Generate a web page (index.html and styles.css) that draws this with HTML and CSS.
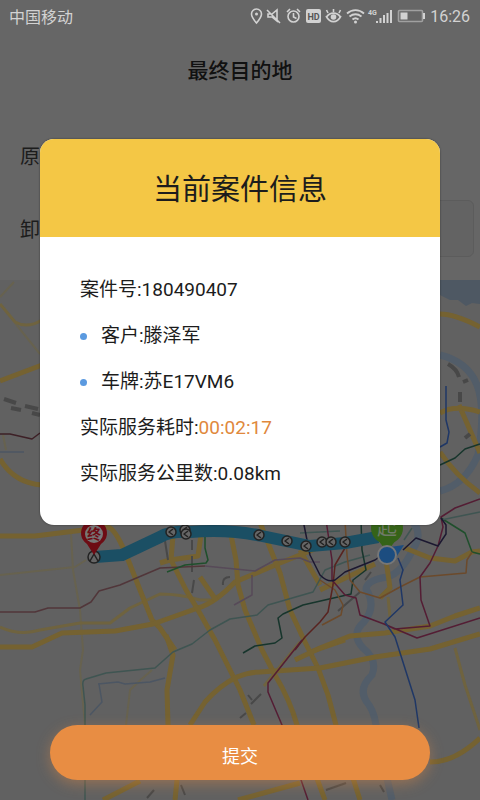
FILE: index.html
```
<!DOCTYPE html>
<html lang="zh-CN">
<head>
  <meta charset="UTF-8">
  <meta name="viewport" content="width=device-width, initial-scale=1.0">
  <title>最终目的地</title>
  <link rel="stylesheet" href="styles.css">
</head>
<body>

  <div class="screen">
    <div class="status-bar">
      <span>中国移动</span>
      <div class="status-icons">
        <svg width="176" height="20" viewBox="0 0 176 20" fill="none" stroke="#d2d2d2" stroke-width="1.6">
          <!-- location -->
          <path d="M7.500 17C4.500 13.500 2.500 10.700 2.500 8a5 5 0 0 1 10 0c0 2.700-2 5.500-5 9z"/>
          <circle cx="7.500" cy="8" r="1.500" fill="#d2d2d2" stroke="none"/>
          <!-- muted -->
          <path d="M19 8h4l5-4v11l-5-4h-4zM18 4l13 13"/>
          <!-- alarm -->
          <circle cx="44.500" cy="10.500" r="5.500"/>
          <path d="M44.500 7v4l3 1.500M38 6l3-3M51 6l-3-3"/>
          <!-- hd -->
          <rect x="57" y="3" width="15" height="14" rx="2" fill="#d2d2d2" stroke="none"/>
          <text x="64.500" y="14" class="hd-text">HD</text>
          <!-- eye -->
          <path d="M77 10c4 7.500 11 7.500 15 0M78 10.500c3-4.500 10-4.500 13 0M84.500 6V3M79 7l-1.500-3M90 7l1.500-3"/>
          <circle cx="84.500" cy="11" r="2.800" fill="#d2d2d2" stroke="none"/>
          <!-- wifi -->
          <path d="M98 7.500c5-4.500 12-4.500 17 0M100.500 10.500c4-3 8-3 12 0M103.500 13.500c2-1.700 4-1.700 6 0" stroke-width="1.800"/>
          <circle cx="106.500" cy="16" r="1.500" fill="#d2d2d2" stroke="none"/>
          <!-- signal -->
          <text x="119" y="9" class="net-text">4G</text>
          <path d="M128 17v-2M131.500 17v-5M135 17V9M138.500 17V7M142 17V4" stroke-width="2"/>
          <!-- battery -->
          <rect x="149.500" y="4.500" width="24" height="11" rx="1" stroke="#a0a0a0"/>
          <path d="M151.500 6.500h7v7h-7z" fill="#d2d2d2" stroke="none"/>
          <path d="M175 7v6" stroke-width="2"/>
        </svg>
        <span>16:26</span>
      </div>
    </div>

    <h1 class="page-title">最终目的地</h1>

    <div class="form">
      <div class="form-row"><span class="form-label">原</span></div>
      <div class="form-row">
        <label class="form-label" for="unload">卸</label>
        <input class="form-input" id="unload" type="text">
      </div>
    </div>

    <div class="map-wrap">
      <svg class="map" viewBox="0 280 480 520" preserveAspectRatio="xMidYMid slice">
        <!-- water -->
        <path class="water-fill" d="M400 280h80v24l-8-1-6 3-8-6-8 0-10-5h-40z"/>
        <g class="water">
          <path d="M440 355Q468 362 477 385T478 455Q465 485 440 491"/>
          <path d="M411 520Q424 533 413 549Q402 573 387 577Q367 580 366 589Q377 606 364 622Q350 634 363 648Q378 660 372 675Q356 690 369 705Q376 715 377 735L392 800"/>
        </g>

        <!-- minor roads -->
        <g class="road-faint">
          <path d="M0 297L14 282M15 323L40 354M0 575L75 567L86 560M71 533L73 570L80 610L83 650L80 670L85 725M126 725L130 690Q140 680 152 670M3 435L6 450"/>
        </g>
        <g class="road-thin">
          <path d="M0 304L15 322Q27 329 42 320M0 627Q20 636 40 630L80 623H110L130 608L160 594Q180 594 200 600H215M455 648L465 685L480 730M300 642L264 686M388 597L390 617"/>
        </g>

        <!-- main roads -->
        <g class="road">
          <path d="M0 381L42 365M0 459Q14 483 42 485M0 536H35L108 527Q115 529 125 552L140 590L152 620L160 628L175 650"/>
          <path d="M0 647H32L62 633L115 631L153 624L198 608Q215 603 235 582L280 563L325 545"/>
          <path d="M160 563L170 560L198 556L201 535M173 535L171 560L186 590L198 610L215 640L240 690L254 725M200 577L216 600M230 530L236 560L238 585L245 610L262 650L275 675Q290 700 297 725L325 800"/>
          <path d="M259 520L272 553L280 573L290 610L304 640L318 668L328 695L336 725L360 800M300 550L320 585M310 652L345 640"/>
          <path d="M440 314Q455 314 480 327M440 413Q455 404 480 412M459 405L480 453M440 452Q455 475 480 493M405 548L430 558L455 561L472 552L480 551"/>
          <path d="M320 590L375 564M386 560L390 588L380 598M295 660L320 648L350 636L385 633L430 626L455 616L480 608"/>
          <path d="M190 725L205 702Q220 685 237 677Q248 672 260 672L320 668L375 657L430 649L480 634M166 635L173 655L167 690L168 725M103 800L140 781M175 800L177 780M430 762Q455 762 480 738M238 800L300 783"/>
        </g>

        <!-- railways -->
        <g class="rail">
          <path d="M4 399L16 403M25 406L38 409M11 408L21 410M32 413L40 415M448 364Q457 369 459 377M460 392V402M465 438L470 434M463 382L468 380"/>
          <path class="rail-thin" d="M192 540V550M192 556V572M194 580L192 593M165 541L168 560M223 585Q222 577 230 577M338 611L360 592M365 580L371 572M240 718L246 713M251 704L261 694M248 695L252 700M147 798L154 790M181 785L185 795M326 790L346 783M380 785L384 792"/>
        </g>

        <!-- metro lines -->
        <g class="metro">
          <path stroke="#3d2026" d="M0 434H10L32 439L40 433"/>
          <path stroke="#4c5663" d="M0 452H24M98 684L118 682L125 684L150 682L165 678M99 684L102 702L90 715"/>
          <path stroke="#51363a" d="M0 612H35L48 608H80L91 602L99 591L120 585L160 568L205 566"/>
          <path stroke="#574a58" d="M205 566L255 571L275 560L300 558L310 562H320M252 575V595L234 605"/>
          <path stroke="#1f4f2c" d="M205 533V548L208 560L206 563L185 565L167 572M441 518L465 533L472 552L480 554"/>
          <path stroke="#3f5552" d="M85 800V705L83 686Q82 680 86 679L106 673L155 668L173 652L192 644L210 630L230 619L257 615L268 605L313 592L325 570L345 562L370 555M441 520L480 512M300 533L340 531M404 540L412 528"/>
          <path stroke="#17352c" d="M243 653L255 646L275 643L282 638L278 618L283 614L303 605L351 594L353 580L366 570L362 550L361 520M440 465L455 458L465 449L480 444"/>
          <path stroke="#6c4a2b" d="M472 552L467 560L466 573L420 577L400 587L380 598L360 592L350 580L347 555L345 520M320 580L335 590L343 605L341 615L322 625"/>
          <path stroke="#582320" d="M345 548L335 565L333 585L328 612L320 622L305 637L295 650"/>
          <path stroke="#541d34" d="M480 499L455 508L441 517L443 527L438 546L430 563L420 577L421 600L430 626L395 629L384 624M302 640L268 683V692L282 725L308 800M326 520L332 560L332 580L345 595L356 598L360 615L384 624L417 638L480 618"/>
          <path stroke="#1c1830" d="M303 520L310 555L320 575Q328 583 335 580L345 572L375 560L382 555M403 550L416 538L438 546L446 534V525L441 518"/>
          <path stroke="#1f3766" d="M446 386V420L449 432L447 443L440 447M398 558L403 570L400 580L403 605L385 622L395 637L415 700L419 728"/>
        </g>

        <!-- driven route -->
        <path class="route" d="M95 557L122 555L160 537Q170 531 190 532Q230 529 262 536L310 546L345 543L378 537"/>
        <g class="arrow">
          <g id="arrow"><circle cx="171" cy="532" r="5"/><path d="M173 529L169 532L173 535"/></g>
          <use href="#arrow" x="14" y="-2"/>
          <use href="#arrow" x="15" y="2"/>
          <use href="#arrow" x="88" y="3"/>
          <use href="#arrow" x="116" y="9"/>
          <use href="#arrow" x="135" y="14"/>
          <use href="#arrow" x="151" y="10"/>
          <use href="#arrow" x="160" y="10"/>
          <use href="#arrow" x="174" y="10"/>
          <circle cx="94" cy="557" r="6"/>
          <path d="M90 561L94 554L98 561"/>
        </g>

        <!-- end marker -->
        <path fill="#6d0c14" d="M94 555L87 544A13 13 0 1 1 101 544z"/>
        <circle cx="94" cy="534" r="9" fill="#777"/>
        <text x="94" y="539" class="end-text">终</text>

        <!-- start marker -->
        <circle cx="387" cy="528" r="16" fill="#356318"/>
        <path fill="#356318" d="M378 540H396L387 552z"/>
        <text x="387" y="535" class="start-text">起</text>
        <path fill="#1c4d80" d="M390 547L404 545L395 559z"/>
        <circle cx="387" cy="555" r="9" fill="#1c4d80" stroke="#777" stroke-width="2"/>
      </svg>
      <button class="submit" type="button">提交</button>
    </div>

    <div class="modal" role="dialog" aria-labelledby="modal-title">
      <h2 class="modal-title" id="modal-title">当前案件信息</h2>
      <div class="modal-body">
        <p>案件号:180490407</p>
        <ul class="case-list">
          <li>客户:滕泽军</li>
          <li>车牌:苏E17VM6</li>
        </ul>
        <p>实际服务耗时:<span class="time">00:02:17</span></p>
        <p>实际服务公里数:0.08km</p>
      </div>
    </div>
  </div>

</body>
</html>
```

FILE: styles.css
```
* {
  box-sizing: border-box;
}

body {
  margin: 0;
  background-color: #666;
  font-family: Roboto, "Noto Sans CJK SC", sans-serif;
  color: #1c1c1c;
}

h1, h2, p, ul {
  margin: 0;
  padding: 0;
}

.screen {
  position: relative;
  display: flex;
  flex-direction: column;
  min-height: 100vh;
}

.status-bar {
  display: flex;
  justify-content: space-between;
  align-items: center;
  height: 32px;
  padding: 0 10px 0 9px;
  font-size: 16px;
  color: #d2d2d2;
}

.status-icons {
  display: flex;
  align-items: center;
  gap: 5px;
}

.hd-text {
  font-size: 9px;
  font-weight: bold;
  text-anchor: middle;
  fill: #555;
  stroke: none;
}

.net-text {
  font-size: 7px;
  font-weight: bold;
  fill: #d2d2d2;
  stroke: none;
}

.page-title {
  font-size: 21px;
  font-weight: 500;
  line-height: 78px;
  text-align: center;
  color: #111;
}

.form {
  display: flex;
  flex-direction: column;
  gap: 16px;
  padding: 17px 6px 23px 20px;
}

.form-row {
  display: flex;
  align-items: center;
  gap: 20px;
  height: 57px;
}

.form-label {
  font-size: 20px;
}

.form-input {
  flex: 1;
  min-width: 0;
  height: 100%;
  border: 1px solid #5c5c5c;
  border-radius: 6px;
  background-color: #636363;
}

/* map */
.map-wrap {
  position: relative;
  flex: 1;
  min-height: 300px;
  background-color: #616161;
}

.map {
  position: absolute;
  top: 0;
  left: 0;
  width: 100%;
  height: 100%;
  fill: none;
  stroke-linejoin: round;
}

.water-fill {
  fill: #4e5863;
}

.water {
  stroke: #525d69;
  stroke-width: 7;
}

.road-faint {
  stroke: #67624f;
  stroke-width: 2;
}

.road-thin {
  stroke: #6f633f;
  stroke-width: 3;
}

.road {
  stroke: #756231;
  stroke-width: 5;
}

.rail {
  stroke: #484848;
  stroke-width: 4;
}

.rail-thin {
  stroke-width: 2;
}

.metro {
  stroke-width: 1.5;
}

.route {
  stroke: #1b4f64;
  stroke-width: 12;
}

.arrow {
  fill: #666;
  stroke: #222;
  stroke-width: 1.5;
}

.arrow path {
  fill: none;
}

.end-text {
  font-size: 14px;
  font-weight: bold;
  text-anchor: middle;
  fill: #6d0c14;
}

.start-text {
  font-size: 20px;
  text-anchor: middle;
  fill: #6f7a68;
}

.submit {
  position: absolute;
  left: 50px;
  right: 50px;
  bottom: 20px;
  height: 55px;
  padding: 4px 0 0;
  border: none;
  border-radius: 28px;
  background-color: #e88d43;
  box-shadow: 0 4px 14px rgba(232, 141, 67, 0.4);
  font-family: inherit;
  font-size: 18px;
  color: #fff;
}

/* case info popup */
.modal {
  position: absolute;
  top: 139px;
  left: 40px;
  right: 40px;
  border-radius: 14px;
  background-color: #fff;
  box-shadow: 0 0 2px rgba(0, 0, 0, 0.5);
  overflow: hidden;
}

.modal-title {
  padding-top: 4px;
  background-color: #f4c745;
  font-size: 29px;
  font-weight: 400;
  line-height: 94px;
  text-align: center;
}

.modal-body {
  padding: 30px 40px 28px;
  font-size: 19px;
  line-height: 46px;
}

.case-list {
  list-style: none;
}

.case-list li {
  display: flex;
  align-items: center;
  gap: 14px;
}

.case-list li::before {
  content: "";
  width: 7px;
  height: 7px;
  border-radius: 50%;
  background-color: #5b9ae0;
}

.time {
  color: #e0883c;
}
```
